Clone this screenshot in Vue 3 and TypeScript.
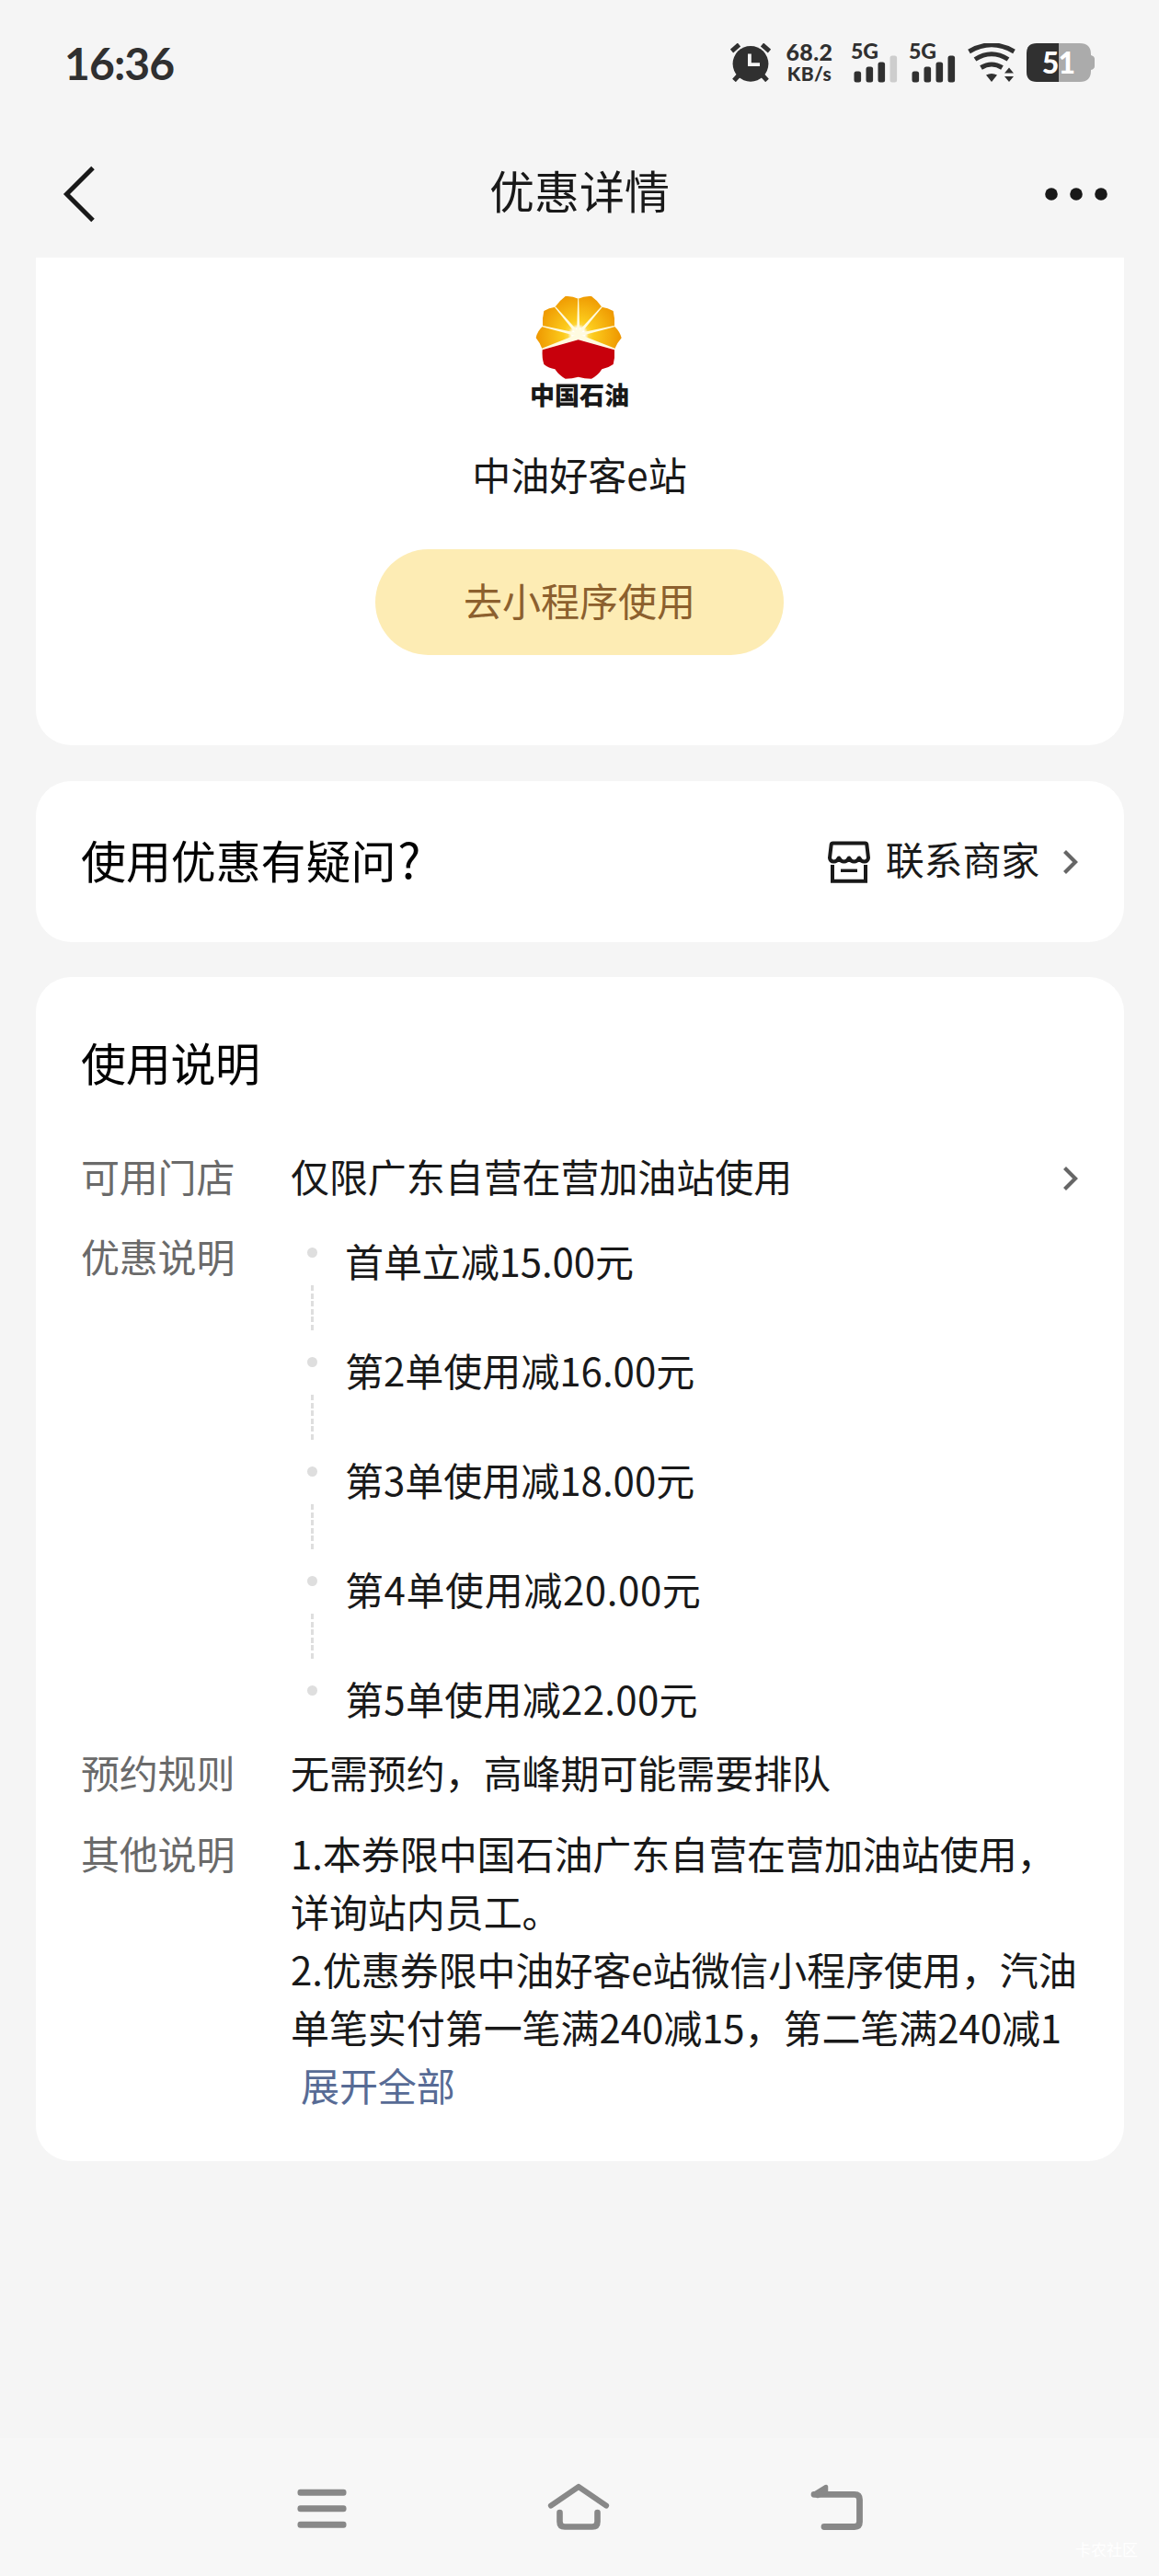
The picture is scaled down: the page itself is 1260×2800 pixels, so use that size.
<script setup lang="ts">
interface Tier {
  text: string
  spacing: number
}

const tiers: Tier[] = [
  { text: '首单立减15.00元', spacing: -0.1 },
  { text: '第2单使用减16.00元', spacing: 0 },
  { text: '第3单使用减18.00元', spacing: 0 },
  { text: '第4单使用减20.00元', spacing: 0.6 },
  { text: '第5单使用减22.00元', spacing: 0.3 },
]

const notes: string[] = [
  '1.本券限中国石油广东自营在营加油站使用，',
  '详询站内员工。',
  '2.优惠券限中油好客e站微信小程序使用，汽油',
  '单笔实付第一笔满240减15，第二笔满240减1',
]
</script>

<template>
  <div class="screen">
    <header class="status">
      <span class="clock">16:36</span>
      <div class="indicators">
        <svg class="alarm" width="44" height="42" viewBox="0 0 44 42">
          <g stroke="#303030" stroke-linecap="butt" fill="none">
            <path d="M1.5 8.5L9.5 1.5M34.5 1.5L42.5 8.5" stroke-width="5" />
            <path d="M9 35L4 40.5M35 35L40 40.5" stroke-width="5" />
          </g>
          <circle cx="22" cy="22.3" r="19.4" fill="#303030" />
          <path d="M20.9 11.5V23.2H32" fill="none" stroke="#f5f5f5" stroke-width="3.8" />
        </svg>
        <div class="speed">
          <span class="num">68.2</span>
          <span class="unit">KB/s</span>
        </div>
        <div class="signal">
          <span class="gen">5G</span>
          <svg width="50" height="30" viewBox="0 0 50 30" fill="#303030">
            <rect x="2.5" y="17.5" width="7.6" height="12" rx="2.5" />
            <rect x="15.5" y="12.5" width="7.6" height="17" rx="2.5" />
            <rect x="28.5" y="7.5" width="7.6" height="22" rx="2.5" />
            <rect x="41.5" y="0.5" width="7.6" height="29" rx="2.5" fill="#cdcdcd" />
          </svg>
        </div>
        <div class="signal second">
          <span class="gen">5G</span>
          <svg width="50" height="30" viewBox="0 0 50 30" fill="#303030">
            <rect x="2.5" y="17.5" width="7.6" height="12" rx="2.5" />
            <rect x="15.5" y="12.5" width="7.6" height="17" rx="2.5" />
            <rect x="28.5" y="7.5" width="7.6" height="22" rx="2.5" />
            <rect x="41.5" y="0.5" width="7.6" height="29" rx="2.5" />
          </svg>
        </div>
        <svg class="wifi" width="52" height="42" viewBox="0 0 52 42">
          <g fill="none" stroke="#303030" stroke-width="5">
            <path d="M1.5 9Q26 -5.5 50.5 9" />
            <path d="M8 17.5Q26 6 44 17.5" />
            <path d="M14.5 26.5Q26 19.5 37.5 26.5" />
          </g>
          <path d="M20 34.5Q26 31.5 32 34.5L26 42Z" fill="#303030" />
          <path d="M40 32.5L45 26.5L50 32.5ZM40 36L45 42L50 36Z" fill="#303030" />
        </svg>
        <div class="battery">
          <svg width="74" height="42" viewBox="0 0 74 42">
            <path d="M35 0H58Q70 0 70 12V13Q74 14 74 17V25Q74 28 70 29V30Q70 42 58 42H35Z" fill="#ababab" />
            <path d="M35 0H11Q0 0 0 11V31Q0 42 11 42H35Z" fill="#303030" />
          </svg>
          <span class="level">51</span>
        </div>
      </div>
    </header>

    <nav class="titlebar">
      <svg class="back" width="36" height="62" viewBox="0 0 36 62">
        <path d="M33 2.5L4.5 31L33 59.5" fill="none" stroke="#191919" stroke-width="5" />
      </svg>
      <h1>优惠详情</h1>
      <svg class="more" width="70" height="16" viewBox="0 0 70 16" fill="#191919">
        <circle cx="8" cy="8" r="6.8" />
        <circle cx="35" cy="8" r="6.8" />
        <circle cx="62" cy="8" r="6.8" />
      </svg>
    </nav>

    <main>
      <section class="card merchant">
        <svg class="flower" width="94" height="92" viewBox="126 64 282 276">
          <defs>
            <radialGradient id="sun" gradientUnits="userSpaceOnUse" cx="266" cy="195" r="140">
              <stop offset="0" stop-color="#fff3a0" />
              <stop offset="0.35" stop-color="#fccb1c" />
              <stop offset="1" stop-color="#ee9600" />
            </radialGradient>
            <radialGradient id="glow" gradientUnits="userSpaceOnUse" cx="266" cy="192" r="34">
              <stop offset="0" stop-color="#fff" />
              <stop offset="0.6" stop-color="#fff" />
              <stop offset="1" stop-color="#fff" stop-opacity="0" />
            </radialGradient>
          </defs>
          <path
            d="M149 240Q142 220 128 203Q132 180 150 165Q148 138 154 115Q170 104 190 102Q204 82 224 67Q246 65 266 75Q286 65 309 67Q330 82 343 102Q362 104 380 115Q386 138 384 165Q402 182 407 203Q392 220 384 240L266 205Z"
            fill="url(#sun)"
          />
          <circle cx="266" cy="192" r="34" fill="url(#glow)" />
          <g fill="#fffbe0">
            <path d="M264.5 75H267.5L271 190H261Z" />
            <path d="M189 103L192 101L270 186L262 194Z" />
            <path d="M344 103L341 101L262 186L270 194Z" />
            <path d="M149 167L150 163L268 188L265 198Z" />
            <path d="M384 167L383 163L264 188L267 198Z" />
            <path d="M148 242L147 237L266 190L386 237L385 242L266 208Z" />
          </g>
          <path
            d="M149 242L266 209L384 242Q386 268 380 289Q362 302 343 305Q330 326 309 336Q286 336 266 330Q246 336 224 336Q204 326 190 305Q170 302 154 289Q147 268 149 242Z"
            fill="#c8000c"
          />
        </svg>
        <span class="brand">中国石油</span>
        <span class="name">中油好客e站</span>
        <button type="button" class="go">去小程序使用</button>
      </section>

      <section class="card help">
        <span class="question">使用优惠有疑问<span class="mark-q">?</span></span>
        <div class="contact">
          <svg class="shop" width="46" height="46" viewBox="0 0 46 46">
            <g fill="none" stroke="#191919" stroke-width="4" stroke-linejoin="round">
              <path
                d="M5.5 2.5H40.5Q42 2.5 42.3 4L44 18.5Q43.5 22.5 39.5 22.5Q36 22.5 34 18.5Q32 22.5 28.5 22.5Q25 22.5 23 18.5Q21 22.5 17.5 22.5Q14 22.5 12 18.5Q10 22.5 6.5 22.5Q2.5 22.5 2 18.5L3.7 4Q4 2.5 5.5 2.5Z"
              />
              <path d="M5 26V43.7H41V26" stroke-linejoin="miter" />
              <path d="M14 32.3H32" stroke-width="3.4" />
            </g>
          </svg>
          <span>联系商家</span>
          <svg class="chev" width="18" height="28" viewBox="0 0 18 28">
            <path d="M2.5 2.5L14 14L2.5 25.5" fill="none" stroke="#666" stroke-width="4.2" />
          </svg>
        </div>
      </section>

      <section class="card rules">
        <h2>使用说明</h2>
        <div class="row stores">
          <span class="label">可用门店</span>
          <span class="value">仅限广东自营在营加油站使用</span>
          <svg class="chev" width="18" height="28" viewBox="0 0 18 28">
            <path d="M2.5 2.5L14 14L2.5 25.5" fill="none" stroke="#666" stroke-width="4.2" />
          </svg>
        </div>
        <div class="row offers">
          <span class="label">优惠说明</span>
          <ul>
            <li v-for="(tier, i) in tiers" :key="i">
              <div class="rail">
                <i class="dot"></i>
                <i v-if="i < tiers.length - 1" class="dash"></i>
              </div>
              <span :style="{ letterSpacing: tier.spacing + 'px' }">{{ tier.text }}</span>
            </li>
          </ul>
        </div>
        <div class="row booking">
          <span class="label">预约规则</span>
          <span class="value">无需预约，高峰期可能需要排队</span>
        </div>
        <div class="row other">
          <span class="label">其他说明</span>
          <div class="value">
            <p v-for="line in notes" :key="line">{{ line }}</p>
            <a class="expand">展开全部</a>
          </div>
        </div>
      </section>
    </main>

    <footer class="sysnav">
      <svg width="54" height="44" viewBox="0 0 54 44" fill="#888">
        <rect x="0.5" y="0.7" width="53" height="7" rx="3" />
        <rect x="0.5" y="18.2" width="53" height="7" rx="3" />
        <rect x="0.5" y="35.7" width="53" height="7" rx="3" />
      </svg>
      <svg class="home" width="68" height="52" viewBox="0 0 68 52" fill="none" stroke="#888" stroke-linecap="round" stroke-linejoin="round">
        <path d="M4 24.5L34 4L64 24.5" stroke-width="6.2" />
        <path d="M13.5 32V42Q13.5 47.5 19 47.5H49Q54.5 47.5 54.5 42V32" stroke-width="6.6" />
      </svg>
      <svg class="return" width="58" height="52" viewBox="0 0 58 52" fill="none" stroke="#888" stroke-linecap="round" stroke-linejoin="round">
        <path d="M4 12.3H48Q53.5 12.3 53.5 18V42Q53.5 47.5 48 47.5H15" stroke-width="6.8" />
        <path d="M4 12L17 4L17 10L8 14Z" stroke-width="4.5" fill="#888" />
      </svg>
      <span class="mark">卡农社区</span>
    </footer>
  </div>
</template>

<style>
body {
  background: #f5f5f5;
}
</style>

<style scoped>
.screen {
  width: 1260px;
  height: 2800px;
  display: flex;
  flex-direction: column;
  overflow: hidden;
  background: #f5f5f5;
  color: #191919;
  font-family: "Noto Sans CJK SC", sans-serif;
  font-size: 42px;
  line-height: 63px;
  white-space: nowrap;
}

svg {
  display: block;
  flex: none;
}

.status {
  box-sizing: border-box;
  height: 140px;
  padding: 47px 70px 0 70px;
  display: flex;
  justify-content: space-between;
  align-items: flex-start;
  color: #303030;
  font-family: Lato, sans-serif;
  font-weight: 700;
}

.clock {
  font-size: 48px;
  line-height: 43px;
  letter-spacing: -0.9px;
}

.indicators {
  display: flex;
  align-items: flex-start;
  height: 42px;
}

.speed {
  display: flex;
  flex-direction: column;
  align-items: center;
  width: 54px;
  margin-left: 15px;
  font-weight: 900;
}

.num {
  margin-top: -1px;
  font-size: 25px;
  line-height: 20px;
  letter-spacing: 0.4px;
}

.unit {
  margin-top: 4px;
  font-size: 21px;
  line-height: 20px;
  letter-spacing: 0.4px;
}

.signal {
  position: relative;
  width: 50px;
  margin-left: 19px;
  padding-top: 12.5px;
}

.signal.second {
  margin-left: 13px;
}

.gen {
  position: absolute;
  left: -1px;
  top: 0;
  font-size: 23px;
  font-weight: 900;
  line-height: 16px;
}

.wifi {
  margin-left: 13px;
}

.battery {
  position: relative;
  margin-left: 12px;
}

.level {
  position: absolute;
  left: 0;
  top: 0;
  width: 69px;
  text-align: center;
  color: #fff;
  font-size: 32px;
  font-weight: 900;
  line-height: 41px;
  letter-spacing: -0.8px;
}

.titlebar {
  box-sizing: border-box;
  height: 140px;
  padding: 2px 55px 0 68px;
  display: grid;
  grid-template-columns: 200px 1fr 200px;
  align-items: center;
}

.titlebar h1 {
  margin: -11px 0 0 11px;
  padding-right: 24px;
  text-align: center;
  font-size: 49px;
  font-weight: 400;
}

.more {
  justify-self: end;
}

main {
  width: 1183px;
  margin-left: 39px;
  height: 2370px;
  display: flex;
  flex-direction: column;
}

.card {
  box-sizing: border-box;
  background: #fff;
  border-radius: 38px;
}

.merchant {
  height: 530px;
  border-radius: 0 0 38px 38px;
  display: flex;
  flex-direction: column;
  align-items: center;
  padding: 41px 1px 0 0;
}

.flower {
  margin-right: 2px;
}

.brand {
  margin-top: 1px;
  font-size: 27px;
  font-weight: 900;
  line-height: 30px;
}

.name {
  margin-top: 39px;
}

.go {
  width: 444px;
  height: 115px;
  margin-top: 51px;
  padding: 0 0 7px;
  border: 0;
  border-radius: 58px;
  background: #fdecb4;
  color: #8c602e;
  font: inherit;
}

.help {
  height: 175px;
  margin-top: 39px;
  padding: 0 49px 0 49px;
  display: flex;
  align-items: center;
  justify-content: space-between;
}

.question {
  color: #000;
  font-size: 49px;
  margin-top: -7px;
  letter-spacing: -0.1px;
}

.mark-q {
  margin-left: 2px;
  font-size: 53px;
}

.contact {
  display: flex;
  align-items: center;
}

.contact span {
  margin: -8px 25px 0 17px;
  letter-spacing: -0.2px;
}

.rules {
  height: 1287px;
  margin-top: 38px;
  padding: 62px 49px 0 49px;
}

.rules h2 {
  margin: 0;
  color: #000;
  font-size: 49px;
  font-weight: 400;
  line-height: 60px;
  letter-spacing: -0.3px;
}

.row {
  display: flex;
  align-items: flex-start;
}

.label {
  width: 228px;
  flex: none;
  color: #6a6a6a;
  letter-spacing: -0.2px;
}

.value {
  flex: 1;
  letter-spacing: -0.07px;
}

.stores {
  margin-top: 62px;
}

.stores .chev {
  margin-top: 21px;
}

.offers {
  margin-top: 24px;
}

.offers ul {
  margin: 5px 0 0;
  padding: 0;
  list-style: none;
}

.offers li {
  display: flex;
  height: 119px;
}

.offers li:last-child {
  height: 63px;
}

.rail {
  width: 46px;
  margin-right: 13px;
  display: flex;
  flex-direction: column;
  align-items: center;
}

.dot {
  width: 11px;
  height: 11px;
  margin-top: 18px;
  border-radius: 50%;
  background: #dedede;
}

.dash {
  width: 3px;
  height: 50px;
  margin-top: 30px;
  background: repeating-linear-gradient(#dedede 0 6px, transparent 6px 8.6px);
}

.booking {
  margin-top: 17px;
}

.other {
  margin-top: 25px;
}

.other p {
  margin: 0;
}

.expand {
  display: block;
  padding-left: 11px;
  color: #576b95;
}

.sysnav {
  position: relative;
  box-sizing: border-box;
  height: 150px;
  padding: 3px 321px 0 323px;
  display: flex;
  align-items: center;
  justify-content: space-between;
  background: #f7f7f7;
}

.home,
.return {
  margin-bottom: 4px;
}

.mark {
  position: absolute;
  right: 23px;
  bottom: 17px;
  color: #fff;
  font-size: 17px;
  line-height: 24px;
}
</style>
